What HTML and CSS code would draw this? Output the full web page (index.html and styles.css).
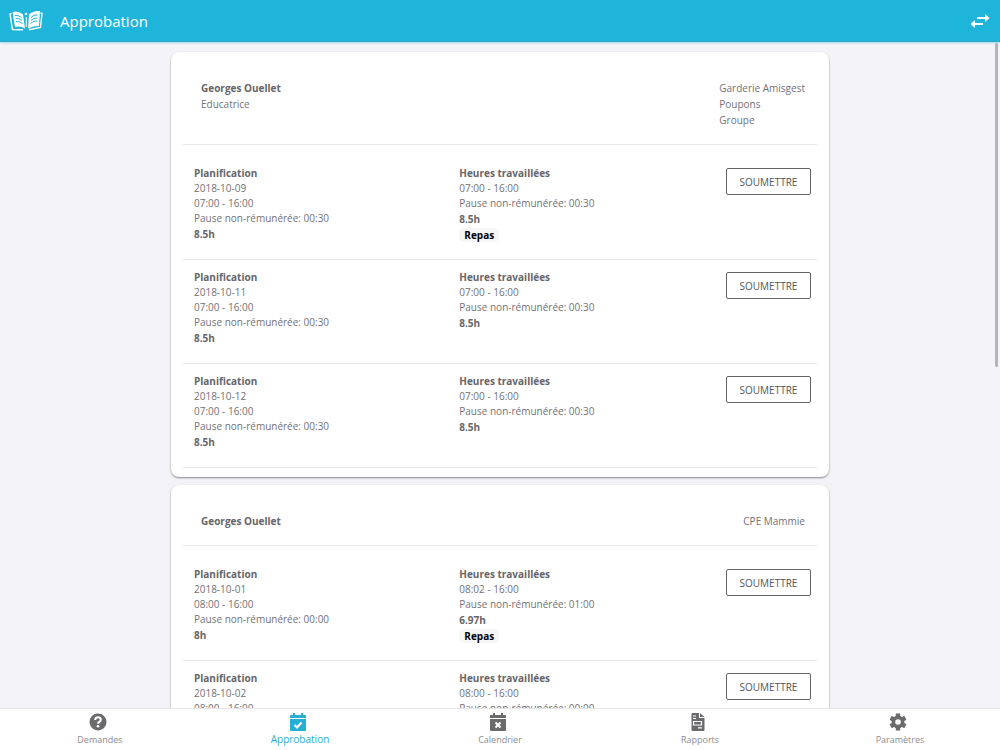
FILE: index.html
```html
<!DOCTYPE html>
<html lang="fr">
<head>
    <meta charset="UTF-8">
    <meta name="viewport" content="width=device-width, initial-scale=1.0">
    <title>Approbation</title>
    <link rel="stylesheet" href="styles.css">
</head>
<body>
    <header class="toolbar">
        <svg class="logo" viewBox="0 0 34 22" aria-hidden="true">
            <path d="M2.500 3.500L1 4L3.500 19.500L14 19.800M31.500 3L33 3.500L31.500 17.500L20 19.800" fill="none" stroke="#fff" stroke-width="1.400"/>
            <path d="M3.500 2Q9 .5 14 4.500L16 18.500Q11 15.500 6 17Z" fill="#fff"/>
            <path d="M31 1Q24 .5 20 4.500L19 18.500Q24 15.500 30 16Z" fill="#fff"/>
            <path d="M6 5.500Q9.500 5 12.500 7.500M6.500 8.500Q10 8 13 10.500M7 11.500Q10.500 11 13.500 13.500M28.500 5Q24.500 4.500 22 7.500M28.200 8Q24.500 7.500 22 10.500M28 11Q24.500 10.500 21.500 13.500" fill="none" stroke="#1fb5da"/>
            <circle cx="17" cy="4" r="1.300" fill="#fff"/>
            <path d="M17.300 7v10" stroke="#fff"/>
        </svg>
        <h1>Approbation</h1>
        <button class="switch-btn" aria-label="Changer">
            <svg viewBox="0 0 20 16" aria-hidden="true">
                <path d="M7 4h8V1L19.500 5 15 9V6H7zM13 10H5V7L.5 11 5 15V12h8z" fill="#fff"/>
            </svg>
        </button>
    </header>

    <main class="content">
        <div class="card-list">
            <section class="card">
                <div class="card-header">
                    <div>
                        <h2>Georges Ouellet</h2>
                        <p>Educatrice</p>
                    </div>
                    <div>
                        <p>Garderie Amisgest</p>
                        <p>Poupons</p>
                        <p>Groupe</p>
                    </div>
                </div>
                <div class="shift">
                    <div>
                        <h3>Planification</h3>
                        <p>2018-10-09</p>
                        <p>07:00 - 16:00</p>
                        <p>Pause non-rémunérée: 00:30</p>
                        <p class="total">8.5h</p>
                    </div>
                    <div>
                        <h3>Heures travaillées</h3>
                        <p>07:00 - 16:00</p>
                        <p>Pause non-rémunérée: 00:30</p>
                        <p class="total">8.5h</p>
                        <span class="tag">Repas</span>
                    </div>
                    <button class="submit-btn">SOUMETTRE</button>
                </div>
                <div class="shift">
                    <div>
                        <h3>Planification</h3>
                        <p>2018-10-11</p>
                        <p>07:00 - 16:00</p>
                        <p>Pause non-rémunérée: 00:30</p>
                        <p class="total">8.5h</p>
                    </div>
                    <div>
                        <h3>Heures travaillées</h3>
                        <p>07:00 - 16:00</p>
                        <p>Pause non-rémunérée: 00:30</p>
                        <p class="total">8.5h</p>
                    </div>
                    <button class="submit-btn">SOUMETTRE</button>
                </div>
                <div class="shift">
                    <div>
                        <h3>Planification</h3>
                        <p>2018-10-12</p>
                        <p>07:00 - 16:00</p>
                        <p>Pause non-rémunérée: 00:30</p>
                        <p class="total">8.5h</p>
                    </div>
                    <div>
                        <h3>Heures travaillées</h3>
                        <p>07:00 - 16:00</p>
                        <p>Pause non-rémunérée: 00:30</p>
                        <p class="total">8.5h</p>
                    </div>
                    <button class="submit-btn">SOUMETTRE</button>
                </div>
            </section>

            <section class="card">
                <div class="card-header">
                    <div>
                        <h2>Georges Ouellet</h2>
                    </div>
                    <div>
                        <p>CPE Mammie</p>
                    </div>
                </div>
                <div class="shift">
                    <div>
                        <h3>Planification</h3>
                        <p>2018-10-01</p>
                        <p>08:00 - 16:00</p>
                        <p>Pause non-rémunérée: 00:00</p>
                        <p class="total">8h</p>
                    </div>
                    <div>
                        <h3>Heures travaillées</h3>
                        <p>08:02 - 16:00</p>
                        <p>Pause non-rémunérée: 01:00</p>
                        <p class="total">6.97h</p>
                        <span class="tag">Repas</span>
                    </div>
                    <button class="submit-btn">SOUMETTRE</button>
                </div>
                <div class="shift">
                    <div>
                        <h3>Planification</h3>
                        <p>2018-10-02</p>
                        <p>08:00 - 16:00</p>
                        <p>Pause non-rémunérée: 00:00</p>
                        <p class="total">8h</p>
                    </div>
                    <div>
                        <h3>Heures travaillées</h3>
                        <p>08:00 - 16:00</p>
                        <p>Pause non-rémunérée: 00:00</p>
                        <p class="total">8h</p>
                    </div>
                    <button class="submit-btn">SOUMETTRE</button>
                </div>
            </section>
        </div>
        <div class="scroll-thumb"></div>
    </main>

    <nav class="bottom-nav">
        <a href="#">
            <svg viewBox="0 0 18 18" aria-hidden="true">
                <circle cx="9" cy="9" r="8.500" fill="currentColor"/>
                <path d="M6.200 7Q6.200 4.300 9 4.300T11.800 6.800Q11.800 8.200 10.200 9Q9 9.600 9 10.800" fill="none" stroke="#fff" stroke-width="2"/>
                <circle cx="9" cy="13.300" r="1.300" fill="#fff"/>
            </svg>
            Demandes
        </a>
        <a href="#" class="active">
            <svg viewBox="0 0 18 18" aria-hidden="true">
                <path d="M1 5V3q0-1 1-1h2V0h2v2h6V0h2v2h2q1 0 1 1v2zM1 6h16v11q0 1-1 1H2q-1 0-1-1z" fill="currentColor"/>
                <path d="M5.500 12l2.500 2.500 4.500-5" fill="none" stroke="#fff" stroke-width="2"/>
            </svg>
            Approbation
        </a>
        <a href="#">
            <svg viewBox="0 0 18 18" aria-hidden="true">
                <path d="M1 5V3q0-1 1-1h2V0h2v2h6V0h2v2h2q1 0 1 1v2zM1 6h16v11q0 1-1 1H2q-1 0-1-1z" fill="currentColor"/>
                <path d="M6.500 9.500l5 5M11.500 9.500l-5 5" fill="none" stroke="#fff" stroke-width="2"/>
            </svg>
            Calendrier
        </a>
        <a href="#">
            <svg viewBox="0 0 18 18" aria-hidden="true">
                <path d="M3 0h7v5h5.500v12q0 1-1 1h-11q-1 0-1-1V1q0-1 1-1zM11 0l4.500 4H11z" fill="currentColor"/>
                <path d="M4 3h3M4 5.500h3M4.500 8.500h8v3.500h-8zM9 14.800h4" fill="none" stroke="#fff" stroke-width="1.200"/>
            </svg>
            Rapports
        </a>
        <a href="#">
            <svg viewBox="0 0 18 18" aria-hidden="true">
                <circle cx="9" cy="9" r="4.600" fill="none" stroke="currentColor" stroke-width="3.600"/>
                <path d="M9 .5v3M9 14.500v3M1.640 4.750l2.600 1.500M13.760 11.750l2.600 1.500M1.640 13.250l2.600-1.500M13.760 6.250l2.600-1.500" stroke="currentColor" stroke-width="4.400"/>
            </svg>
            Paramètres
        </a>
    </nav>
</body>
</html>
```
FILE: styles.css
```css
* {
    margin: 0;
    padding: 0;
    box-sizing: border-box;
    font-family: 'Open Sans', 'Noto Sans', sans-serif;
}
body {
    display: flex;
    flex-direction: column;
    height: 100vh;
    background-color: #f4f3f8;
    color: #737176;
    font-size: 10px;
    line-height: 15px;
}
button {
    cursor: pointer;
}
.toolbar {
    display: flex;
    align-items: center;
    height: 42px;
    padding: 0 10px 0 9px;
    background-color: #1fb5da;
    border-bottom: 1px solid #2aa3c4;
    box-shadow: 0 1px 2px rgba(31,181,218,0.4);
    position: relative;
    z-index: 1;
}
.logo {
    width: 34px;
    height: 22px;
    margin-right: 17px;
}
.toolbar h1 {
    flex: 1;
    color: white;
    font-size: 15px;
    font-weight: normal;
    line-height: 20px;
}
.switch-btn {
    background: none;
    border: none;
    height: 16px;
}
.switch-btn svg {
    display: block;
    width: 20px;
    height: 16px;
}
.content {
    flex: 1;
    min-height: 0;
    padding-top: 10px;
    overflow-y: auto;
    scrollbar-width: none;
    position: relative;
}
.card-list {
    width: 66%;
    margin: 0 auto;
    padding: 0 1px;
}
.card {
    background-color: white;
    border-radius: 8px;
    padding: 0 12px 9px;
    margin-bottom: 8px;
    box-shadow: 0 1px 2px rgba(0,0,0,0.45);
}
.card-header {
    display: flex;
    justify-content: space-between;
    padding: 28px 12px 16px 18px;
    margin-bottom: 11px;
    border-bottom: 1px solid #e9e8ea;
    line-height: 16px;
}
h2,
h3,
.total {
    font-size: 10px;
    font-weight: bold;
    line-height: 16px;
    color: #676569;
}
.shift {
    display: grid;
    grid-template-columns: 43% 1fr auto;
    align-items: start;
    padding: 9px 6px 17px 11px;
    border-bottom: 1px solid #e9e8ea;
}
.tag {
    display: block;
    width: 40px;
    margin-top: 1px;
    border-radius: 5px;
    background-color: #f6f6f7;
    color: black;
    font-weight: bold;
    line-height: 14px;
    text-align: center;
}
.submit-btn {
    width: 85px;
    height: 27px;
    margin-top: 3px;
    background-color: white;
    border: 1px solid #656467;
    border-radius: 2px;
    color: #555457;
    font-size: 10px;
}
.scroll-thumb {
    position: absolute;
    top: 1px;
    right: 2px;
    width: 3px;
    height: 324px;
    border-radius: 2px;
    background-color: #b5b4b8;
}
.bottom-nav {
    display: flex;
    height: 42px;
    background-color: white;
    border-top: 1px solid #e6e5e9;
}
.bottom-nav a {
    flex: 1;
    display: flex;
    flex-direction: column;
    align-items: center;
    padding-top: 4px;
    text-decoration: none;
    color: #8c8b8e;
    font-size: 9px;
}
.bottom-nav svg {
    width: 18px;
    height: 18px;
    margin: 0 4px 1px 0;
    color: #6b6a6c;
}
.bottom-nav .active,
.bottom-nav .active svg {
    color: #27aed3;
}
.bottom-nav .active {
    font-size: 10px;
}
```
